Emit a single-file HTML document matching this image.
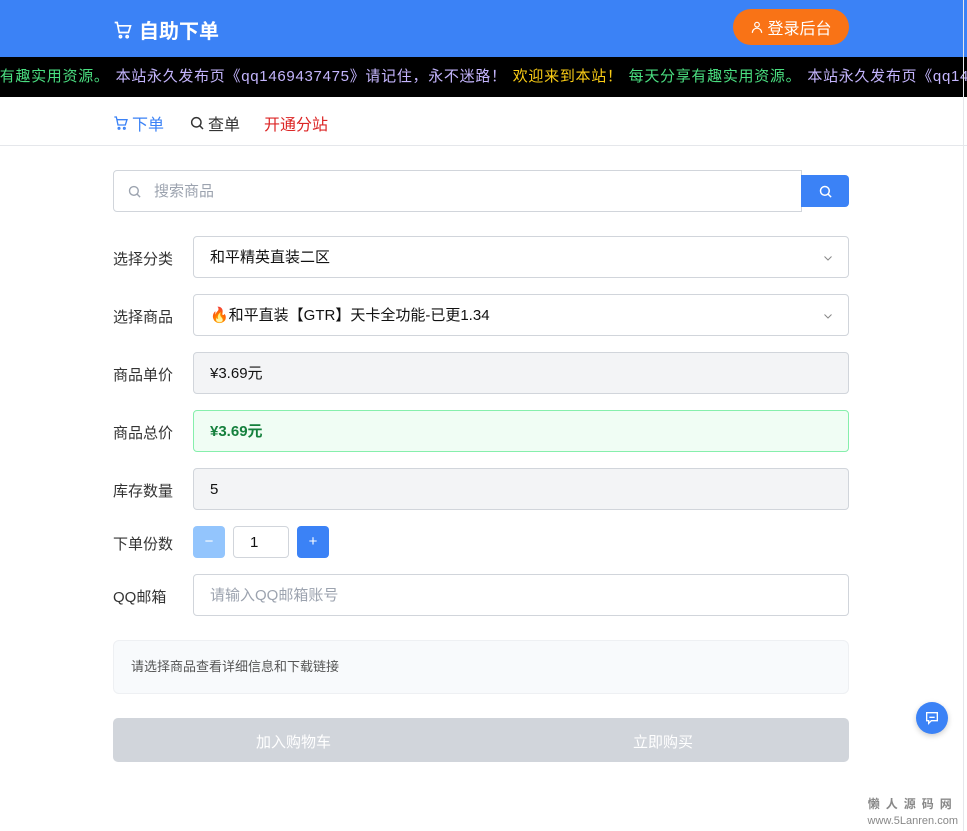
<!DOCTYPE html>
<html><head><meta charset="utf-8"><style>
*{box-sizing:border-box;margin:0;padding:0}
body{width:967px;height:831px;overflow:hidden;background:#fff;font-family:"Liberation Sans","Noto Sans CJK SC",sans-serif;position:relative;color:#333}
.hd{height:57px;background:#3b82f6;position:relative}
.logo{position:absolute;left:113px;top:15px;color:#fff;font-size:20px;font-weight:bold;display:flex;align-items:center;gap:6px}
.login{position:absolute;left:733px;top:9px;width:116px;height:36px;border-radius:18px;background:#f97316;color:#fff;font-size:16px;display:flex;align-items:center;justify-content:center;gap:3px}
.mq{height:40px;background:#000;position:relative;overflow:hidden;white-space:nowrap;font-size:15px;line-height:40px;letter-spacing:0.7px}
.mq>span{position:absolute;left:-16px;top:0}
.mq span span{margin-right:6px}
.g{color:#4ade80}.p{color:#c4b5fd}.y{color:#facc15}
.nav{height:49px;border-bottom:1px solid #e5e7eb;position:relative;font-size:16px}
.nav div{position:absolute;top:14px;display:flex;align-items:center;gap:3px}
.srch{position:absolute;left:113px;top:170px;width:689px;height:42px;border:1px solid #d1d5db;border-radius:4px 0 0 4px;font-size:15px;color:#9ca3af;padding-left:40px;line-height:41px}
.sbtn{position:absolute;left:801px;top:175px;width:48px;height:32px;background:#3b82f6;border-radius:0 4px 4px 0;display:flex;align-items:center;justify-content:center}
.lb{position:absolute;left:113px;font-size:15px;color:#333}
.fd{position:absolute;left:193px;width:656px;height:42px;border:1px solid #d1d5db;border-radius:4px;font-size:15px;line-height:42px;padding-left:16px;color:#111}
.gray{background:#f3f4f6}
.chev{position:absolute;right:14px;top:15px}
.qb{position:absolute;top:526px;width:32px;height:32px;border-radius:4px;color:#fff;text-align:center;line-height:32px;font-size:15px}
.info{position:absolute;left:113px;top:640px;width:736px;height:54px;border:1px solid #eef0f3;background:#f8fafc;border-radius:6px;font-size:13px;color:#555;line-height:52px;padding-left:17px}
.btns{position:absolute;left:113px;top:718px;width:736px;height:44px;background:#d1d5db;border-radius:5px;color:#fff;font-size:15px}
.btns span{position:absolute;top:13px}
.chat{position:absolute;left:916px;top:702px;width:32px;height:32px;border-radius:50%;background:#3b82f6;box-shadow:0 2px 6px rgba(0,0,0,.2);display:flex;align-items:center;justify-content:center}
.wm{position:absolute;right:9px;top:796px;text-align:center;color:#888;font-size:12px;line-height:17px}
</style></head><body>
<div class="hd">
<div class="logo"><svg width="20" height="20" viewBox="0 0 24 24" fill="none" stroke="#fff" stroke-width="2"><path d="M2 3h3l2.5 12h11L21 7H6"/><circle cx="9" cy="20" r="1.3"/><circle cx="17" cy="20" r="1.3"/></svg>自助下单</div>
<div class="login"><svg width="14" height="14" viewBox="0 0 24 24" fill="none" stroke="#fff" stroke-width="2"><circle cx="12" cy="8" r="4"/><path d="M4 22c0-5 4-8 8-8s8 3 8 8"/></svg>登录后台</div>
</div>
<div class="mq"><span><span class="g">享有趣实用资源。</span><span class="p">本站永久发布页《qq1469437475》请记住，永不迷路！</span><span class="y">欢迎来到本站！</span><span class="g">每天分享有趣实用资源。</span><span class="p">本站永久发布页《qq1469437475》</span></span></div>
<div class="nav">
<div style="left:113px;color:#3b82f6"><svg width="16" height="16" viewBox="0 0 24 24" fill="none" stroke="#3b82f6" stroke-width="2"><path d="M2 3h3l2.5 12h11L21 7H6"/><circle cx="9" cy="20" r="1.3"/><circle cx="17" cy="20" r="1.3"/></svg>下单</div>
<div style="left:189px;color:#333"><svg width="16" height="16" viewBox="0 0 24 24" fill="none" stroke="#333" stroke-width="2.2"><circle cx="11" cy="11" r="7"/><path d="M16 16l5 5"/></svg>查单</div>
<div style="left:264px;color:#dc2626">开通分站</div>
</div>
<div class="srch"><svg style="position:absolute;left:13px;top:13px" width="15" height="15" viewBox="0 0 24 24" fill="none" stroke="#9ca3af" stroke-width="2.2"><circle cx="11" cy="11" r="7"/><path d="M16 16l5 5"/></svg>搜索商品</div>
<div class="sbtn"><svg width="15" height="15" viewBox="0 0 24 24" fill="none" stroke="#fff" stroke-width="2.4"><circle cx="11" cy="11" r="7"/><path d="M16 16l5 5"/></svg></div>
<div class="lb" style="top:248px">选择分类</div>
<div class="fd" style="top:236px">和平精英直装二区<svg class="chev" width="12" height="12" viewBox="0 0 24 24" fill="none" stroke="#888" stroke-width="2"><path d="M5 9l7 7 7-7"/></svg></div>
<div class="lb" style="top:306px">选择商品</div>
<div class="fd" style="top:294px">🔥和平直装【GTR】天卡全功能-已更1.34<svg class="chev" width="12" height="12" viewBox="0 0 24 24" fill="none" stroke="#888" stroke-width="2"><path d="M5 9l7 7 7-7"/></svg></div>
<div class="lb" style="top:364px">商品单价</div>
<div class="fd gray" style="top:352px">¥3.69元</div>
<div class="lb" style="top:422px">商品总价</div>
<div class="fd" style="top:410px;background:#f0fdf4;border-color:#86efac;color:#15803d;font-weight:bold">¥3.69元</div>
<div class="lb" style="top:480px">库存数量</div>
<div class="fd gray" style="top:468px">5</div>
<div class="lb" style="top:533px">下单份数</div>
<div class="qb" style="left:193px;background:#93c5fd">−</div>
<div style="position:absolute;left:233px;top:526px;width:56px;height:32px;border:1px solid #d1d5db;border-radius:4px;font-size:15px;line-height:32px;padding-left:16px;color:#111">1</div>
<div class="qb" style="left:297px;background:#3b82f6">+</div>
<div class="lb" style="top:586px">QQ邮箱</div>
<div class="fd" style="top:574px;color:#9ca3af">请输入QQ邮箱账号</div>
<div class="info">请选择商品查看详细信息和下载链接</div>
<div class="btns"><span style="left:143px">加入购物车</span><span style="left:520px">立即购买</span></div>
<div class="chat"><svg width="16" height="16" viewBox="0 0 24 24" fill="none" stroke="#fff" stroke-width="2"><path d="M4 4h16v12h-9l-4 4v-4H4z"/><path d="M8 11h8"/></svg></div>
<div style="position:absolute;left:963px;top:0;width:1px;height:831px;background:#e5e7eb"></div>
<div class="wm"><div style="letter-spacing:6px;font-weight:bold">懒人源码网</div><div style="font-size:11px">www.5Lanren.com</div></div>
</body></html>
